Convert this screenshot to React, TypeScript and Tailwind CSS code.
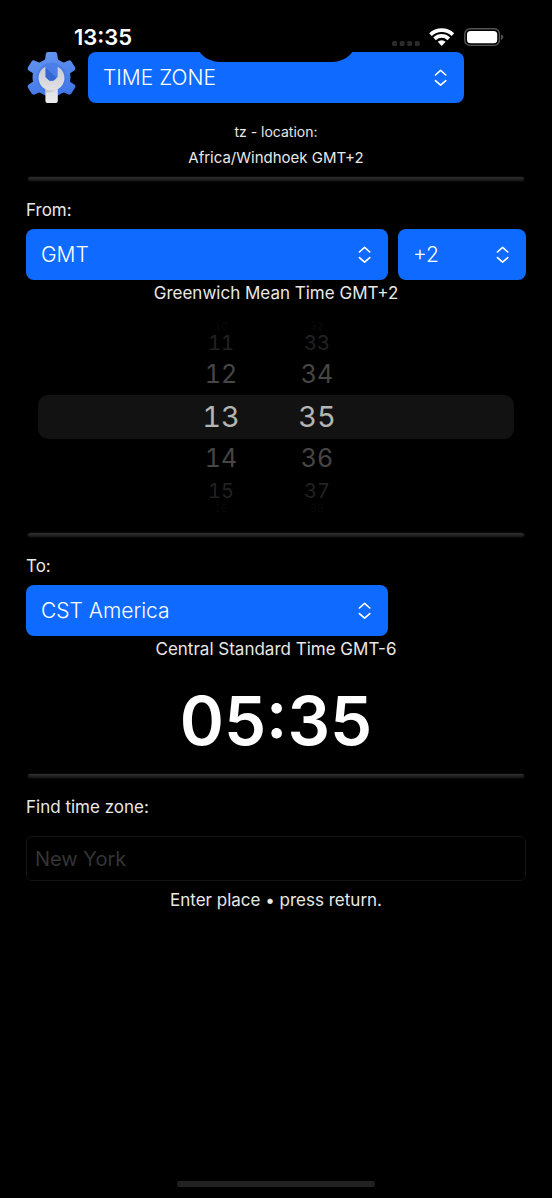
import { useState } from 'react';
import type { ReactNode } from 'react';

const pickerRows = [
  { hour: '10', minute: '32', style: 'h-2.5 text-[10px] text-[#0a0a0a]' },
  { hour: '11', minute: '33', style: 'h-6 text-[20px] text-[#222222]' },
  { hour: '12', minute: '34', style: 'h-10 text-[25px] text-[#464646]' },
  { hour: '13', minute: '35', style: 'h-11 text-[29px] text-[#b4b4b4] bg-[#121212] rounded-[10px]' },
  { hour: '14', minute: '36', style: 'h-10 text-[25px] text-[#464646]' },
  { hour: '15', minute: '37', style: 'h-6 text-[20px] text-[#222222]' },
  { hour: '16', minute: '38', style: 'h-2.5 text-[10px] text-[#0a0a0a]' },
];

function GearIcon() {
  return (
    <svg viewBox="0 0 51 51" className="h-[51px] w-[51px] shrink-0" aria-hidden="true">
      <defs>
        <linearGradient id="gear" gradientUnits="userSpaceOnUse" x1="18" y1="0" x2="32" y2="51">
          <stop offset="0" stopColor="#6595f0" />
          <stop offset="1" stopColor="#3a70e6" />
        </linearGradient>
        <linearGradient id="wrench" x1="0" y1="0" x2="0" y2="1">
          <stop offset="0" stopColor="#c9ccd2" />
          <stop offset="1" stopColor="#ececee" />
        </linearGradient>
      </defs>
      {/* Gear body and teeth share one gradient */}
      <g fill="url(#gear)">
        <circle cx="25.5" cy="25.5" r="19" />
        <path d="M16 11 Q18.8 9.5 19.2 6.5 L19.8 2 Q20 0 22 0 H29 Q31 0 31.2 2 L31.8 6.5 Q32.2 9.5 35 11 Z" />
        <path d="M33 9.5 Q36 11.2 38.6 10.2 L42.6 8.4 Q44.4 7.8 45.4 9.4 L49.2 15.4 Q50 17.2 48.4 18.4 L44.4 21 Q42.2 23 42.6 26 Z" />
        <path d="M42.6 25 Q42.2 28 44.4 30 L48.4 32.6 Q50 33.8 49.2 35.6 L45.4 41.6 Q44.4 43.2 42.6 42.6 L38.6 40.8 Q36 39.8 33 41.5 Z" />
        <path d="M18 9.5 Q15 11.2 12.4 10.2 L8.4 8.4 Q6.6 7.8 5.6 9.4 L1.8 15.4 Q1 17.2 2.6 18.4 L6.6 21 Q8.8 23 8.4 26 Z" />
        <path d="M8.4 25 Q8.8 28 6.6 30 L2.6 32.6 Q1 33.8 1.8 35.6 L5.6 41.6 Q6.6 43.2 8.4 42.6 L12.4 40.8 Q15 39.8 18 41.5 Z" />
      </g>
      <circle cx="25.5" cy="25.5" r="14.8" fill="#4376e4" opacity=".6" />
      <path d="M19.4 15.4 L31.6 27 L22 29 L19.4 25 Z" fill="#3566cf" />
      <path
        d="M19.4 15.6 Q19.4 14.6 18.4 15.2 C14.8 17.4 12.6 21.5 12.6 25.8 C12.6 31 15.5 35.2 19.4 37.2 V49 Q19.4 51 21.4 51 H29.8 Q31.8 51 31.8 49 V37.2 C35.7 35.2 38.4 31 38.4 25.8 C38.4 21.5 36.2 17.4 32.6 15.2 Q31.6 14.6 31.6 15.6 V25 L28 28.4 Q25.5 29.6 23 28.4 L19.4 25 Z"
        fill="url(#wrench)"
      />
      <path d="M19.4 37.2 C23 39 28 39 31.8 37.2 Q26 40.4 19.4 41 Z" fill="#b9bcc4" opacity=".7" />
    </svg>
  );
}

function StatusIcons() {
  return (
    <svg viewBox="0 0 112 20" className="h-5 w-28" aria-hidden="true">
      <g fill="#2b2b2b">
        <rect x="0" y="13" width="5" height="5" rx="1.5" />
        <rect x="7.6" y="13" width="5" height="5" rx="1.5" />
        <rect x="15.2" y="13" width="5" height="5" rx="1.5" />
        <rect x="22.8" y="13" width="5" height="5" rx="1.5" />
      </g>
      <g fill="none" stroke="#fff" strokeWidth="3.7">
        <path d="M38.5 6.6 A16 16 0 0 1 60.9 6.6" />
        <path d="M42.6 10.8 A10.2 10.2 0 0 1 56.8 10.8" />
      </g>
      <path d="M49.7 18 L45.8 13.8 A5.6 5.6 0 0 1 53.6 13.8 Z" fill="#fff" />
      <rect x="72.8" y="0.8" width="34.6" height="16.6" rx="5.2" fill="none" stroke="#555" strokeWidth="1.4" />
      <rect x="75" y="3" width="30.2" height="12.2" rx="3.5" fill="#fff" />
      <path d="M109 6.5 Q111.2 7.3 111.2 9.2 Q111.2 11.1 109 11.9 Z" fill="#555" />
    </svg>
  );
}

type SelectBoxProps = {
  id: string;
  label: string;
  options: string[];
};

function SelectBox({ id, label, options }: SelectBoxProps) {
  return (
    <div className="relative">
      <select
        id={id}
        aria-label={label}
        className="block h-[51px] w-full appearance-none rounded-lg bg-[#0f6bff] px-[15px] text-[21px] font-light text-white outline-none"
      >
        {options.map((option) => (
          <option key={option}>{option}</option>
        ))}
      </select>
      <svg
        viewBox="0 0 14 18"
        className="pointer-events-none absolute top-[17px] right-4 h-[18px] w-3.5"
        fill="none"
        stroke="#fff"
        strokeWidth="1.6"
        strokeLinecap="round"
        strokeLinejoin="round"
        aria-hidden="true"
      >
        <path d="M1.4 6 L6.6 1.4 L11.8 6" />
        <path d="M1.4 11.6 L6.6 16.2 L11.8 11.6" />
      </svg>
    </div>
  );
}

function Divider() {
  return (
    <hr className="mx-0.5 mt-1.5 h-1 rounded-sm border-0 bg-linear-to-b from-[#303030] to-[#141414] shadow-[0_0_2px_#222]" />
  );
}

function Caption({ children }: { children: ReactNode }) {
  return <p className="text-center text-[17px] leading-[26px]">{children}</p>;
}

export default function App() {
  const [place, setPlace] = useState('');

  return (
    <div
      className="relative flex min-h-screen flex-col bg-black text-[#e8e8e8]"
      style={{ fontFamily: 'Inter, "Liberation Sans", sans-serif' }}
    >
      {/* Status bar */}
      <header className="flex h-[52px] items-end justify-between pr-12 pb-1 pl-[74px]">
        <span className="text-[22px] leading-[22px] font-semibold text-white">13:35</span>
        <StatusIcons />
      </header>
      <div className="absolute top-0 left-1/2 z-10 h-[62px] w-[164px] -translate-x-1/2 rounded-b-[26px] bg-black" />

      <main className="px-[26px]">
        <div className="flex gap-[11px] pr-[62px]">
          <GearIcon />
          <div className="flex-1">
            <SelectBox id="mode" label="Mode" options={['TIME ZONE']} />
          </div>
        </div>

        <div className="pt-4 text-center">
          <p className="text-[14px] leading-[26px]">tz - location:</p>
          <p className="text-[15px] leading-[26px]">Africa/Windhoek GMT+2</p>
        </div>
        <Divider />

        {/* From */}
        <label htmlFor="from" className="mt-4 mb-1.5 block text-[17px] leading-[26px]">
          From:
        </label>
        <div className="grid grid-cols-[1fr_128px] gap-2.5">
          <SelectBox id="from" label="From" options={['GMT']} />
          <SelectBox id="offset" label="Offset" options={['+2']} />
        </div>
        <Caption>Greenwich Mean Time GMT+2</Caption>

        {/* Time wheel */}
        <div className="mx-3 flex h-[221px] flex-col justify-center tabular-nums">
          {pickerRows.map((row) => (
            <div key={row.hour} className={`flex items-center justify-center pr-3.5 leading-none ${row.style}`}>
              <button className="w-24 leading-none">{row.hour}</button>
              <button className="w-24 leading-none">{row.minute}</button>
            </div>
          ))}
        </div>
        <Divider />

        {/* To */}
        <label htmlFor="to" className="mt-4 mb-1.5 block text-[17px] leading-[26px]">
          To:
        </label>
        <div className="pr-[138px]">
          <SelectBox id="to" label="To" options={['CST America']} />
        </div>
        <Caption>Central Standard Time GMT-6</Caption>
        <p className="pt-3 text-center text-[67px] leading-[94px] font-semibold text-white">05:35</p>
        <Divider />

        {/* Search */}
        <label htmlFor="place" className="mt-4 mb-4 block text-[17px] leading-[26px]">
          Find time zone:
        </label>
        <input
          id="place"
          type="text"
          value={place}
          onChange={(e) => setPlace(e.target.value)}
          placeholder="New York"
          className="mb-1.5 block h-[45px] w-full rounded-md border border-[#141414] bg-black px-2 text-[20px] text-white outline-none placeholder:text-[#343434]"
        />
        <Caption>Enter place • press return.</Caption>
      </main>

      <div className="mx-auto mt-auto mb-[11px] h-1.5 w-[198px] rounded-full bg-[#222222]" />
    </div>
  );
}
